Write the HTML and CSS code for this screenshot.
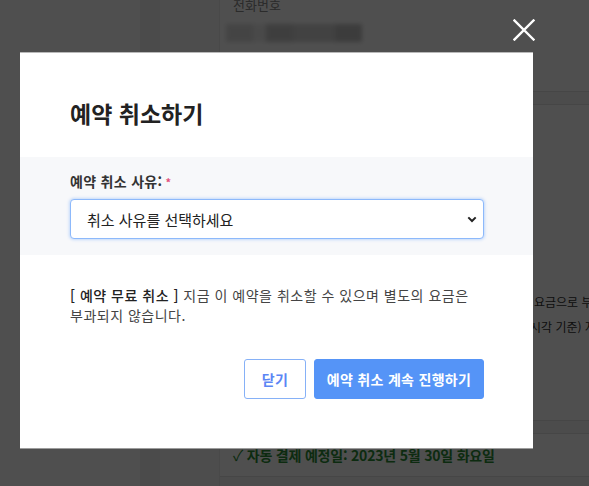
FILE: index.html
```html
<!DOCTYPE html>
<html lang="ko">
<head>
<meta charset="utf-8">
<title>예약 취소하기</title>
<link rel="stylesheet" href="styles.css">
</head>
<body>
<div class="page">
  <aside class="nav"></aside>
  <div class="rail"></div>
  <div class="gutter"></div>
  <main class="content">
    <section class="card card-phone">
      <div class="field-label">전화번호</div>
      <div class="masked"><span></span><span></span><span></span><span></span><span></span></div>
    </section>
    <section class="card card-policy">
      <p class="policy-line l1">요금으로 부과됩니다.</p>
      <p class="policy-line l2">시각 기준) 자동 결제</p>
    </section>
    <section class="card card-payment">
      <p class="pay-date"><span class="check">✓</span> 자동 결제 예정일: 2023년 5월 30일 화요일</p>
    </section>
    <section class="card card-more"></section>
  </main>
</div>

<div class="overlay">
  <button class="close" type="button" aria-label="닫기">
    <svg width="22" height="22" viewBox="0 0 22 22"><path d="M1.5 1.5 L20.5 20.5 M20.5 1.5 L1.5 20.5" stroke="#fff" stroke-width="2.4" stroke-linecap="square" fill="none"/></svg>
  </button>
  <div class="modal">
    <div class="modal-header">
      <h2 class="modal-title">예약 취소하기</h2>
    </div>
    <div class="modal-form">
      <label class="form-label" for="reason">예약 취소 사유:<span class="required">*</span></label>
      <div class="select-wrap">
        <select id="reason" class="form-select">
          <option>취소 사유를 선택하세요</option>
        </select>
        <svg class="chevron" width="10" height="7" viewBox="0 0 10 7"><path d="M1.3 1.4 L5 5 L8.7 1.4" stroke="#222" stroke-width="2" fill="none"/></svg>
      </div>
    </div>
    <div class="modal-body">
      <p class="notice"><span class="notice-tag">[ 예약 무료 취소 ]</span> 지금 이 예약을 취소할 수 있으며 별도의 요금은 부과되지 않습니다.</p>
    </div>
    <div class="modal-footer">
      <button class="btn btn-outline" type="button">닫기</button>
      <button class="btn btn-primary" type="button">예약 취소 계속 진행하기</button>
    </div>
  </div>
</div>
</body>
</html>
```

FILE: styles.css
```css
* { box-sizing: border-box; }

html, body {
  margin: 0;
  padding: 0;
  width: 589px;
  height: 486px;
  overflow: hidden;
  background: #fff;
  font-family: "Noto Sans CJK KR", "Noto Sans", sans-serif;
}

/* background page */
.page {
  display: flex;
  height: 486px;
  overflow: hidden;
}
.nav { width: 140px; flex: none; background: #ffffff; }
.rail { width: 20px; flex: none; background: #f3f3f3; }
.gutter { width: 60px; flex: none; background: #f8f8f8; border-right: 1px solid #ececec; }
.content {
  flex: 1;
  display: flex;
  flex-direction: column;
  background: #f6f6f6;
  overflow: hidden;
}
.card { background: #fff; }
.card-phone {
  height: 92px;
  padding: 0 0 0 13px;
  border-bottom: 1px solid #e2e2e2;
}
.field-label {
  margin-top: -4px;
  font-size: 13px;
  line-height: 18px;
  color: #8a8a8a;
}
.masked {
  display: flex;
  margin: 10px 0 0 -7px;
  width: 136px;
  height: 18px;
  filter: blur(2px);
  opacity: 0.8;
}
.masked span { flex: 1; background: #d4d4d4; }
.masked span:nth-child(2) { background: #e8e8e8; flex: 0.5; }
.masked span:nth-child(3) { background: #bcbcbc; }
.masked span:nth-child(4) { background: #cacaca; flex: 1.6; }
.masked span:nth-child(5) { background: #b4b4b4; }

.card-policy {
  margin-top: 12px;
  height: 317px;
  padding: 184px 0 0 0;
  border-top: 1px solid #e2e2e2;
  border-bottom: 1px solid #e2e2e2;
}
.policy-line {
  margin: 0;
  font-size: 12px;
  line-height: 25px;
  color: #333;
  white-space: nowrap;
}
.l1 { padding-left: 314px; }
.l2 { padding-left: 310px; }
.card-payment {
  margin-top: 12px;
  height: 44px;
  padding: 11px 0 0 13px;
  border-top: 1px solid #e2e2e2;
  border-bottom: 1px solid #e2e2e2;
}
.pay-date {
  margin: 0;
  font-size: 14px;
  line-height: 20px;
  font-weight: 700;
  color: #2a8c36;
  white-space: nowrap;
  letter-spacing: -0.2px;
}
.check { font-weight: 400; font-size: 15px; }
.card-more { margin-top: 0; flex: 1; background: #f6f6f6; }

/* overlay + modal */
.overlay {
  position: fixed;
  inset: 0;
  background: rgba(0, 0, 0, 0.69);
  padding: 52px 0 0 20px;
}
.close {
  position: absolute;
  top: 19px;
  left: 513px;
  width: 22px;
  height: 22px;
  padding: 0;
  border: 0;
  background: transparent;
  cursor: pointer;
}
.close svg { display: block; }

.modal {
  width: 513px;
  height: 397px;
  background: #fff;
  border-top: 1px solid #b9b9b9;
  border-bottom: 1px solid #9c9c9c;
  display: flex;
  flex-direction: column;
}
.modal-header { padding: 44px 50px 27px; }
.modal-title {
  margin: 0;
  font-size: 23px;
  line-height: 33px;
  font-weight: 700;
  color: #222;
}
.modal-form {
  background: #f7f8fa;
  padding: 14px 49px 16px 50px;
}
.form-label {
  display: block;
  font-size: 14px;
  line-height: 21px;
  font-weight: 700;
  color: #333;
  letter-spacing: 0.3px;
}
.required {
  color: #e2507a;
  font-size: 11px;
  margin-left: 3px;
  letter-spacing: 0;
}
.select-wrap {
  position: relative;
  margin-top: 6px;
}
.form-select {
  display: block;
  width: 100%;
  height: 40px;
  padding: 0 30px 0 16px;
  font-family: inherit;
  font-size: 15px;
  color: #222;
  background: #fff;
  border: 1px solid #8db9fb;
  border-radius: 4px;
  box-shadow: 0 0 3px 1px rgba(13, 110, 253, 0.22);
  appearance: none;
  -webkit-appearance: none;
  outline: none;
}
.chevron {
  position: absolute;
  right: 7px;
  top: 17px;
  pointer-events: none;
}
.modal-body { padding: 30px 49px 0 50px; }
.notice {
  margin: 0;
  font-size: 14px;
  line-height: 20px;
  color: #444;
  letter-spacing: 0.5px;
  word-break: keep-all;
}
.notice-tag { color: #222; font-weight: 500; }
.modal-footer {
  display: flex;
  justify-content: flex-end;
  gap: 8px;
  padding: 34px 49px 0 50px;
}
.btn {
  height: 40px;
  border-radius: 3px;
  font-family: inherit;
  font-size: 14px;
  font-weight: 700;
  cursor: pointer;
  letter-spacing: 0.3px;
}
.btn-outline {
  width: 62px;
  background: #fff;
  color: #5c86f5;
  border: 1px solid #86b1f7;
}
.btn-primary {
  width: 170px;
  background: #5594f7;
  color: #fff;
  border: 1px solid #5594f7;
  padding: 0 6px;
}
```
